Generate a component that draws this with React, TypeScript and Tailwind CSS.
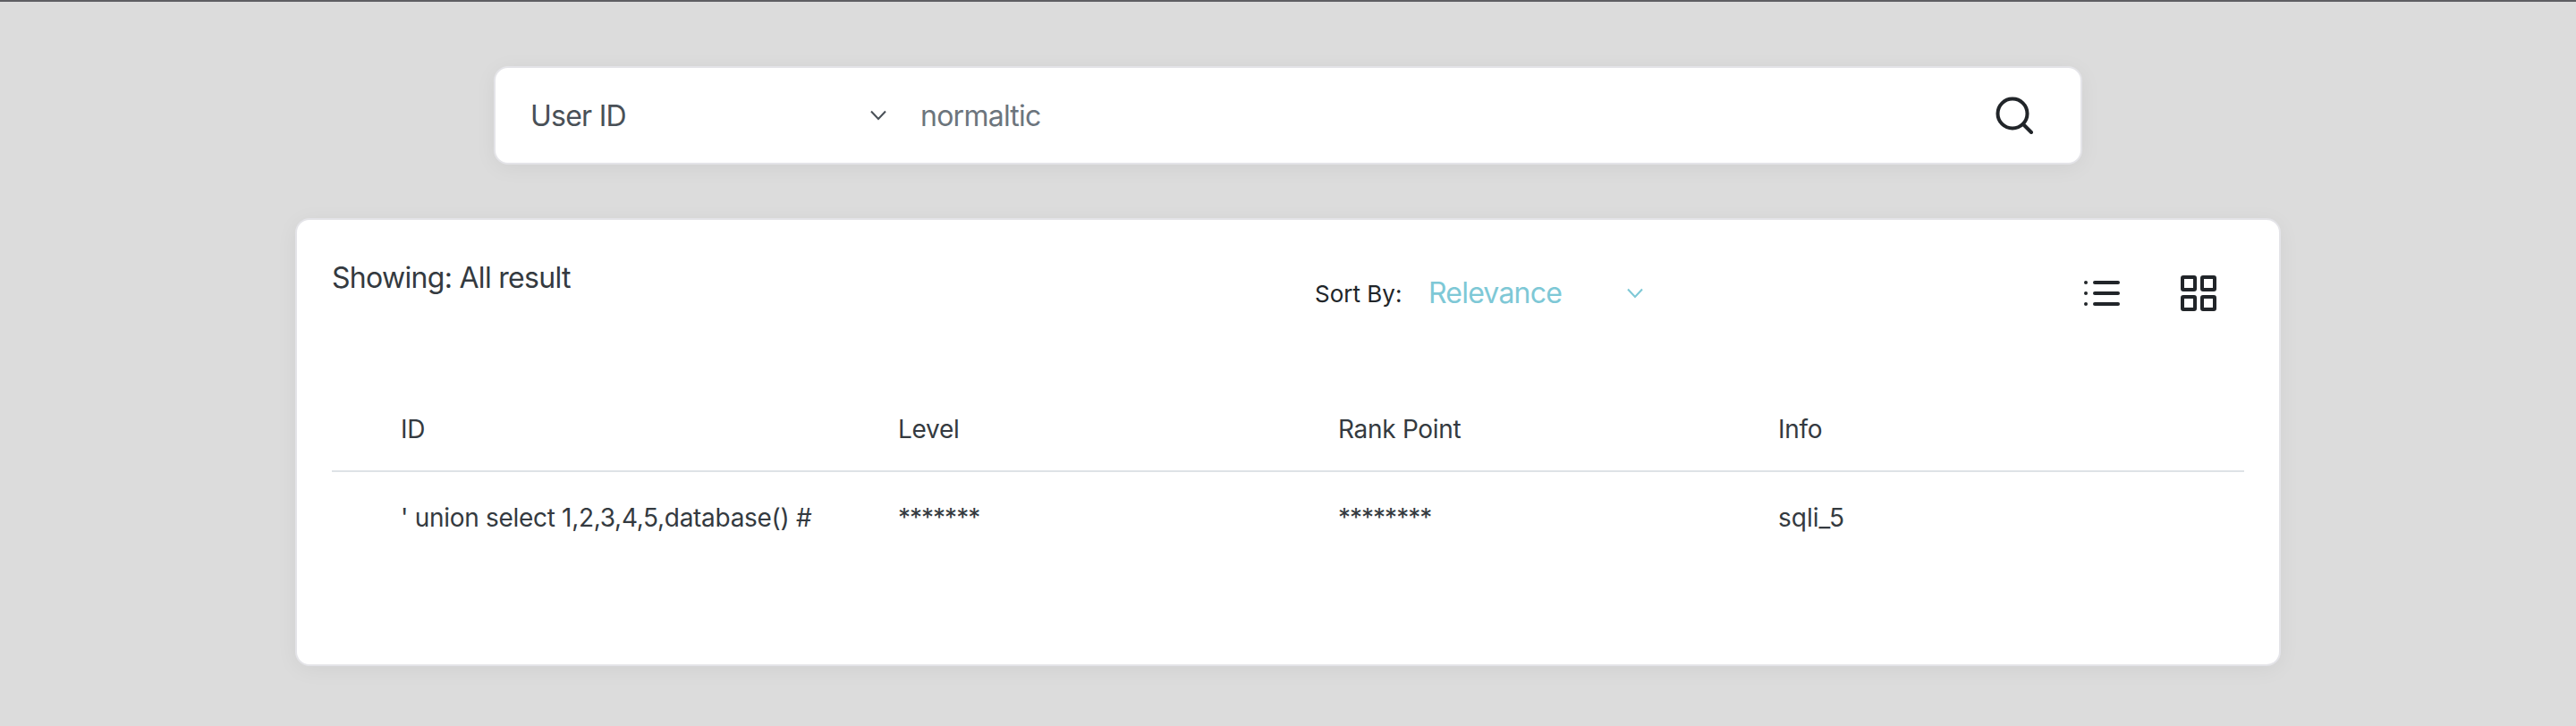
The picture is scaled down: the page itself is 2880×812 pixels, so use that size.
import React from "react";

function Chevron({ className }: { className: string }) {
  return (
    <svg className={className} width="18" height="12" viewBox="0 0 18 12" fill="none" stroke="currentColor" strokeWidth="2">
      <path d="M1 1.5 9 10 17 1.5" />
    </svg>
  );
}

export default function App() {
  return (
    <div className="h-[812px] w-[2880px] overflow-hidden border-t-2 border-[#5f5f63] bg-[#dcdcdc] font-['Inter',sans-serif]">
      <div className="ml-[552px] mt-[72px] flex h-[110px] w-[1776px] items-center rounded-2xl border-2 border-[#e4e4e8] bg-white pl-[39px] pr-[53px] pt-[2px] shadow-[0_4px_24px_rgba(0,0,0,0.05)]">
        <span className="w-[380px] text-[32px] tracking-[-0.75px] text-[#495057]">User ID</span>
        <Chevron className="-mt-[2px] text-[#495057]" />
        <span className="ml-[38px] flex-1 text-[32px] tracking-[-0.75px] text-[#6c757d]">normaltic</span>
        <svg className="-mt-[2px]" width="42" height="42" viewBox="0 0 42 42" fill="none" stroke="#212529" strokeWidth="4" strokeLinecap="round">
          <circle cx="19" cy="19" r="16.5" />
          <path d="M31 31 40 40" />
        </svg>
      </div>

      <div className="ml-[330px] mt-[60px] h-[501px] w-[2220px] rounded-2xl border-2 border-[#e4e4e8] bg-white pl-[39px] pr-[39px] pt-[41px] shadow-[0_4px_24px_rgba(0,0,0,0.05)]">
        <div className="flex h-[82px] items-start">
          <span className="w-[1099px] text-[32px] leading-[48px] tracking-[-0.7px] text-[#343a40]">Showing: All result</span>
          <div className="flex h-[82px] w-[370px] items-center">
            <span className="w-[127px] text-[26px] text-[#212529]">Sort By:</span>
            <span className="w-[222px] text-[32px] tracking-[-0.8px] text-[#7ec8d6]">Relevance</span>
            <Chevron className="text-[#7ec8d6]" />
          </div>
          <div className="ml-auto flex h-[82px] items-center gap-[68px] pr-[31px]">
            <svg width="40" height="28" viewBox="0 0 40 28" fill="#212529">
              <circle cx="2" cy="2" r="2" />
              <circle cx="2" cy="14" r="2" />
              <circle cx="2" cy="26" r="2" />
              <rect x="10" y="0" width="30" height="4" rx="2" />
              <rect x="10" y="12" width="30" height="4" rx="2" />
              <rect x="10" y="24" width="30" height="4" rx="2" />
            </svg>
            <svg width="40" height="40" viewBox="0 0 40 40" fill="none" stroke="#212529" strokeWidth="4" strokeLinejoin="round">
              <rect x="2" y="2" width="14" height="14" rx="1" />
              <rect x="24" y="2" width="14" height="14" rx="1" />
              <rect x="2" y="24" width="14" height="14" rx="1" />
              <rect x="24" y="24" width="14" height="14" rx="1" />
            </svg>
          </div>
        </div>
        <div className="mt-[67px] grid h-[92px] grid-cols-[633px_492px_492px_520px] items-center border-b-2 border-[#dee2e6] pb-[2px] text-[28px] tracking-[-0.3px] text-[#343a40]">
          <span className="pl-[77px]">ID</span>
          <span>Level</span>
          <span>Rank Point</span>
          <span>Info</span>
        </div>
        <div className="grid h-[102px] grid-cols-[633px_492px_492px_520px] items-center text-[28px] tracking-[-0.3px] text-[#343a40]">
          <span className="pl-[77px]">' union select 1,2,3,4,5,database() #</span>
          <span className="tracking-[-1px]">*******</span>
          <span className="tracking-[-1px]">********</span>
          <span className="tracking-[0px]">sqli_5</span>
        </div>
      </div>
    </div>
  );
}
